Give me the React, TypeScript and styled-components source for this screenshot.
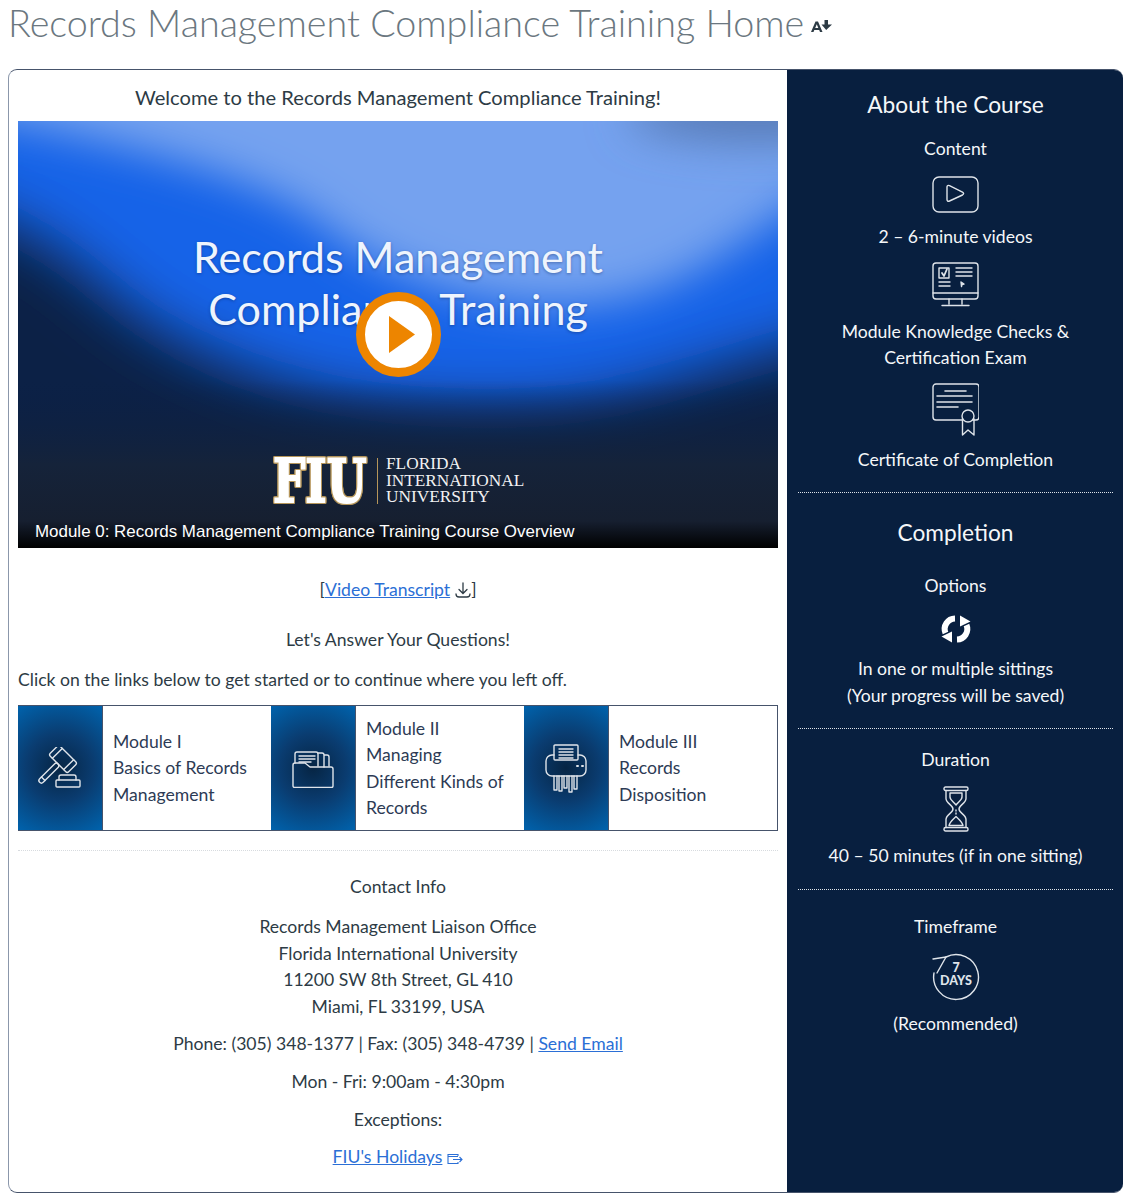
import React from "react";
import styled, { createGlobalStyle } from "styled-components";

const GlobalStyle = createGlobalStyle`
  html, body {
    margin: 0;
    padding: 0;
    background: #fff;
  }
  body {
    font-family: "Lato", "Helvetica Neue", Arial, sans-serif;
    font-size: 17.6px;
    line-height: 26.4px;
    color: #2d3b45;
  }
`;

const Page = styled.div`
  width: 1129px;
  height: 1200px;
  padding: 0 6px 0 8px;
  box-sizing: border-box;
  overflow: hidden;
`;

const TitleRow = styled.div`
  display: flex;
  align-items: center;
  height: 69px;
  padding-bottom: 23px;
  box-sizing: border-box;
  gap: 7px;
`;

const Title = styled.h1`
  margin: 0;
  font-weight: 300;
  font-size: 37.7px;
  line-height: 50px;
  color: #6b7780;
  white-space: nowrap;
`;

const TitleIcon = styled.svg`
  margin-top: 5px;
`;

const Panel = styled.div`
  display: grid;
  grid-template-columns: 1fr 336px;
  height: 1124px;
  box-sizing: border-box;
  border: 1px solid #46536b;
  border-left-color: #8b97ab;
  border-right: none;
  border-radius: 9px;
  overflow: hidden;
`;

const Main = styled.main`
  padding: 14px 9px 0 9px;
  min-width: 0;
  line-height: 26.5px;
`;

const Para = styled.p<{ $top?: number; $left?: boolean }>`
  margin: ${(p) => p.$top ?? 0}px 0 0;
  text-align: ${(p) => (p.$left ? "left" : "center")};
`;

const Welcome = styled(Para)`
  font-size: 20.15px;
  line-height: 27px;
`;

const Poster = styled.div`
  position: relative;
  width: 760px;
  height: 427px;
  margin-top: 10px;
  overflow: hidden;
  background: #0f2142;
`;

const PosterArt = styled.svg`
  display: block;
  width: 100%;
  height: 100%;
`;

const PosterTitle = styled.div`
  position: absolute;
  left: 0;
  right: 0;
  top: 109px;
  text-align: center;
  color: #eef4fd;
  font-size: 43.1px;
  line-height: 52px;
  text-shadow: 0 1px 3px rgba(10, 30, 80, 0.4);
`;

const PlayButton = styled.svg`
  position: absolute;
  left: 337px;
  top: 170px;
  width: 87px;
  height: 87px;
`;

const Logo = styled.div`
  position: absolute;
  left: 255px;
  top: 335px;
  display: flex;
  align-items: center;
  height: 50px;
`;

const LogoMark = styled.span`
  display: inline-block;
  width: 104px;
  font-family: "DejaVu Serif", serif;
  font-weight: 700;
  font-size: 60px;
  line-height: 50px;
  color: #fff;
  -webkit-text-stroke: 2px #fff;
  transform: scaleX(0.76);
  transform-origin: left center;
  filter: drop-shadow(1px 0 0 #b6965a) drop-shadow(-1px 0 0 #b6965a) drop-shadow(0 1px 0 #b6965a) drop-shadow(0 -1px 0 #b6965a);
`;

const LogoRule = styled.span`
  width: 1px;
  height: 46px;
  background: #b6965a;
  margin-right: 8px;
`;

const LogoName = styled.span`
  font-family: "Liberation Serif", serif;
  font-size: 17.3px;
  line-height: 16.5px;
  color: #f2f2f2;
`;

const Caption = styled.div`
  position: absolute;
  left: 17px;
  bottom: 4px;
  font-family: "Liberation Sans", Arial, sans-serif;
  font-size: 16.95px;
  line-height: 24px;
  color: #fff;
`;

const Link = styled.a`
  color: #2b6fd6;
  text-decoration: underline;
`;

const InlineIcon = styled.svg<{ $drop?: number }>`
  display: inline-block;
  vertical-align: ${(p) => p.$drop ?? -3}px;
  margin-left: 5px;
`;

const Modules = styled.div`
  display: grid;
  grid-template-columns: repeat(3, 253px);
  width: 760px;
  height: 126px;
  margin-top: 11px;
  box-sizing: border-box;
  border: 1px solid #46536b;
  border-left: none;
`;

const ModuleCard = styled.div`
  display: grid;
  grid-template-columns: 85px 1fr;
  min-width: 0;
`;

const ModuleIcon = styled.div`
  display: flex;
  align-items: center;
  justify-content: center;
  background: radial-gradient(circle at center, #062544 0%, #0a3c70 45%, #0063ad 100%);
  border-right: 1px solid #46536b;
`;

const ModuleText = styled.a`
  display: flex;
  flex-direction: column;
  justify-content: center;
  padding: 2px 0 0 10px;
  color: #2d3b55;
`;

const Divider = styled.hr`
  border: 0;
  border-top: 1px dotted #d7dbdf;
  margin: 19px 0 0;
`;

const Sidebar = styled.aside`
  background: #081f3f;
  color: #f5f7f9;
  padding: 20px 10px 0 11px;
  text-align: center;
`;

const SideHeading = styled.h2<{ $top?: number }>`
  margin: ${(p) => p.$top ?? 0}px 0 0;
  font-weight: 400;
  font-size: 22.7px;
  line-height: 30px;
`;

const SideText = styled.p<{ $top?: number }>`
  margin: ${(p) => p.$top ?? 0}px 0 0;
`;

const SideIcon = styled.div<{ $top: number; $h: number }>`
  display: flex;
  justify-content: center;
  margin-top: ${(p) => p.$top}px;
  height: ${(p) => p.$h}px;
`;

const SideRule = styled.hr<{ $top: number }>`
  border: 0;
  border-top: 1px dotted #dfe4ea;
  margin: ${(p) => p.$top}px 0 0;
`;

const ic = { fill: "none", stroke: "#dfe4ea", strokeWidth: 1.4, strokeLinecap: "round", strokeLinejoin: "round" } as const;

const GavelIcon = () => (
  <svg width="44" height="42" viewBox="0 0 44 42" {...ic}>
    <g transform="translate(25 12) rotate(-45)">
      <rect x="-7" y="-13" width="14" height="26" rx="2" />
      <path d="M-7 -8H7M-7 8H7" />
      <rect x="-33" y="-2.500" width="26" height="5" rx="2.500" />
      <path d="M-28 -2.500v5" />
    </g>
    <path d="M21 33v-3a2 2 0 0 1 2-2h13a2 2 0 0 1 2 2v3" />
    <rect x="18" y="33" width="24" height="7" rx="1" />
  </svg>
);

const FolderIcon = () => (
  <svg width="42" height="40" viewBox="0 0 42 40" {...ic}>
    <path d="M3 15V6a2 2 0 0 1 2-2h19a2 2 0 0 1 2 2v12" />
    <path d="M7 8h16M7 11h16M7 14h12" />
    <path d="M26 5h4a2 2 0 0 1 2 2v12M32 7h3a2 2 0 0 1 2 2v9" />
    <path d="M1 38V17a2 2 0 0 1 2-2h10l5 4h21a2 2 0 0 1 2 2v17a1.500 1.500 0 0 1-1.500 1.500H2.500A1.500 1.500 0 0 1 1 38z" />
  </svg>
);

const ShredderIcon = () => (
  <svg width="44" height="50" viewBox="0 0 44 50" {...ic}>
    <path d="M10 16V3a1 1 0 0 1 1-1h22a1 1 0 0 1 1 1v13a1 1 0 0 1-1 1H11a1 1 0 0 1-1-1z" />
    <path d="M15 6h14M15 9h14M15 12h14M15 15h14" />
    <path d="M10 12H8a6 6 0 0 0-6 6v9a6 6 0 0 0 6 6h28a6 6 0 0 0 6-6v-9a6 6 0 0 0-6-6h-2" />
    <path d="M33 23h1M38 23h1" strokeWidth={2} />
    <path d="M10 33v14h3V33M15 33v15h3V33M20 33v12h3V33M25 33v16h3V33M30 33v13h3V33" />
  </svg>
);

const VideoIcon = () => (
  <svg width="47" height="37" viewBox="0 0 47 37" {...ic}>
    <rect x="1" y="1" width="45" height="35" rx="6" />
    <path d="M15 11.500c0-1.500 1-2 2.500-1.300l13 6.500c1.500.8 1.500 2 0 2.800l-13 6c-1.500.6-2.500 0-2.500-1.500z" transform="translate(0 -.5)" />
  </svg>
);

const ExamIcon = () => (
  <svg width="47" height="46" viewBox="0 0 47 46" {...ic}>
    <rect x="1" y="1" width="45" height="36" rx="3" />
    <path d="M1 31h45" />
    <path d="M17 37v5M30 37v5M10 43.500h27" />
    <rect x="7" y="6" width="10" height="10" />
    <path d="M10 11l2 3 3-7" strokeWidth={1.8} />
    <path d="M7 20h11M7 24h11M24 6h16M24 10h16M24 14h16" />
    <path d="M29 20l3 2-2 .5-.5 2z" fill="#dfe4ea" />
  </svg>
);

const CertificateIcon = () => (
  <svg width="47" height="54" viewBox="0 0 47 54" {...ic}>
    <path d="M30 37H4a3 3 0 0 1-3-3V4a3 3 0 0 1 3-3h40a3 3 0 0 1 3 3v30a3 3 0 0 1-3 3h-3" />
    <path d="M13 8h21M5 13h35M5 19h35M5 24h21" strokeWidth={1.6} />
    <circle cx="36" cy="33" r="6" />
    <path d="M30.500 36v16l5.500-5 6 5V36" />
  </svg>
);

const CycleHalf = () => (
  <>
    <path d="M15 3.500A10.500 10.500 0 0 0 5.500 18" fill="none" stroke="#fff" strokeWidth="6" />
    <path d="M1.500 21.500L12 16.500V27.500z" fill="#fff" />
  </>
);

const CycleIcon = () => (
  <svg width="32" height="28" viewBox="0 0 32 28">
    <CycleHalf />
    <g transform="rotate(180 16 14)">
      <CycleHalf />
    </g>
  </svg>
);

const HourglassIcon = () => (
  <svg width="26" height="46" viewBox="0 0 26 46" {...ic}>
    <rect x="1" y="1" width="24" height="3.500" rx="1.500" />
    <rect x="1" y="41.500" width="24" height="3.500" rx="1.500" />
    <path d="M3 4.500v8c0 5 7 6.500 7 10.500s-7 5.500-7 10.500v8M23 4.500v8c0 5-7 6.500-7 10.500s7 5.500 7 10.500v8" />
    <path d="M7 7h12v4c0 3-4 5-6 8-2-3-6-5-6-8z" />
    <path d="M13 24v1M13 27v1" />
    <path d="M6 39.500c1-4 5-7 7-9 2 2 6 5 7 9z" />
  </svg>
);

const DaysMark = styled.div`
  position: relative;
  width: 48px;
  height: 48px;
`;

const DaysLabel = styled.div`
  position: absolute;
  left: 1px;
  right: 0;
  top: 8px;
  text-align: center;
  font-family: "Lato", sans-serif;
  font-weight: 900;
  font-size: 12.5px;
  line-height: 13px;
  color: #dfe4ea;
`;

const DaysIcon = () => (
  <DaysMark>
    <svg width="48" height="48" viewBox="0 0 48 48" {...ic}>
      <path d="M14 4A22.400 22.400 0 1 1 2 20" />
      <path d="M1 6L14 4L5 20" />
    </svg>
    <DaysLabel>
      7
      <br />
      DAYS
    </DaysLabel>
  </DaysMark>
);

const modules = [
  { icon: <GavelIcon />, lines: ["Module I", "Basics of Records", "Management"] },
  { icon: <FolderIcon />, lines: ["Module II", "Managing", "Different Kinds of", "Records"] },
  { icon: <ShredderIcon />, lines: ["Module III", "Records", "Disposition"] },
];

const App = () => (
  <>
    <GlobalStyle />
    <Page>
      <TitleRow>
        <Title>Records Management Compliance Training Home</Title>
        <TitleIcon width="21" height="12" viewBox="0 0 21 12">
          <path fillRule="evenodd" d="M0 12L4.500 1.500h2.500L11.500 12H9L8.200 10H3.300L2.500 12zM4.200 8h3.100L5.750 4.200z" fill="#2d3b45" />
          <path d="M13.500 0h3.500v4.500h4L15.200 10 10.500 4.500h3z" fill="#2d3b45" />
        </TitleIcon>
      </TitleRow>
      <Panel>
        <Main>
          <Welcome>Welcome to the Records Management Compliance Training!</Welcome>
          <Poster>
            <PosterArt viewBox="0 0 760 428" preserveAspectRatio="none">
              <defs>
                <filter id="soft" filterUnits="userSpaceOnUse" x="-200" y="-200" width="1160" height="830">
                  <feGaussianBlur stdDeviation="22" />
                </filter>
                <filter id="softer" filterUnits="userSpaceOnUse" x="-200" y="-200" width="1160" height="830">
                  <feGaussianBlur stdDeviation="30" />
                </filter>
                <linearGradient id="floor" x1="0" y1="0" x2="0" y2="1">
                  <stop offset="0" stopColor="#0a1f44" stopOpacity="0" />
                  <stop offset="0.5" stopColor="#15233a" />
                  <stop offset="0.84" stopColor="#161f30" />
                  <stop offset="1" stopColor="#000" />
                </linearGradient>
              </defs>
              <rect width="760" height="428" fill="#0c2146" />
              <path
                d="M-60 -60H820V215C700 240 620 285 500 288C380 290 260 280 135 205C80 170 40 110 -60 85Z"
                fill="#1664e8"
                filter="url(#softer)"
              />
              <path
                d="M-60 -60V-10C90 20 230 50 300 100C380 170 500 195 594 180C680 165 730 110 820 60V-60Z"
                fill="#74a2ef"
                filter="url(#soft)"
              />
              <ellipse cx="740" cy="-6" rx="130" ry="26" fill="#5679b4" filter="url(#soft)" />
              <rect y="260" width="760" height="168" fill="url(#floor)" />
            </PosterArt>
            <PosterTitle>
              Records Management
              <br />
              Compliance Training
            </PosterTitle>
            <PlayButton viewBox="0 0 87 87">
              <circle cx="43.500" cy="43.500" r="38" fill="#fff" stroke="#ed8500" strokeWidth="9" />
              <path d="M34 25l26 18.500L34 62z" fill="#ed8500" />
            </PlayButton>
            <Logo>
              <LogoMark>FIU</LogoMark>
              <LogoRule />
              <LogoName>
                FLORIDA
                <br />
                INTERNATIONAL
                <br />
                UNIVERSITY
              </LogoName>
            </Logo>
            <Caption>Module 0: Records Management Compliance Training Course Overview</Caption>
          </Poster>
          <Para $top={29}>
            [<Link href="#">Video Transcript</Link>
            <InlineIcon width="16" height="17" viewBox="0 0 16 17" fill="none" stroke="#2d3b45" strokeWidth="1.3" strokeLinecap="round">
              <path d="M8 1v10M4 7.500L8 11.500l4-4M1 12c0 2 1 3 3 3h8c2 0 3-1 3-3" />
            </InlineIcon>
            ]
          </Para>
          <Para $top={23}>Let's Answer Your Questions!</Para>
          <Para $top={14} $left>
            Click on the links below to get started or to continue where you left off.
          </Para>
          <Modules>
            {modules.map((m) => (
              <ModuleCard key={m.lines[0]}>
                <ModuleIcon>{m.icon}</ModuleIcon>
                <ModuleText>
                  {m.lines.map((l) => (
                    <span key={l}>{l}</span>
                  ))}
                </ModuleText>
              </ModuleCard>
            ))}
          </Modules>
          <Divider />
          <Para $top={23}>Contact Info</Para>
          <Para $top={14}>
            Records Management Liaison Office
            <br />
            Florida International University
            <br />
            11200 SW 8th Street, GL 410
            <br />
            Miami, FL 33199, USA
          </Para>
          <Para $top={11}>
            Phone: (305) 348-1377 | Fax: (305) 348-4739 | <Link href="#">Send Email</Link>
          </Para>
          <Para $top={11}>Mon - Fri: 9:00am - 4:30pm</Para>
          <Para $top={12}>Exceptions:</Para>
          <Para $top={10}>
            <Link href="#">FIU's Holidays</Link>
            <InlineIcon $drop={-2} width="16" height="12" viewBox="0 0 16 12" fill="none" stroke="#2b6fd6" strokeWidth="1.1">
              <path d="M11 3V1.500H1v9h10V9M1 3.500h10M6 6.500h9M12.500 4l2.500 2.500L12.500 9" />
            </InlineIcon>
          </Para>
        </Main>
        <Sidebar>
          <SideHeading>About the Course</SideHeading>
          <SideText $top={16}>Content</SideText>
          <SideIcon $top={14} $h={37}>
            <VideoIcon />
          </SideIcon>
          <SideText $top={11}>2 – 6-minute videos</SideText>
          <SideIcon $top={11} $h={46}>
            <ExamIcon />
          </SideIcon>
          <SideText $top={11}>
            Module Knowledge Checks &amp;
            <br />
            Certification Exam
          </SideText>
          <SideIcon $top={11} $h={54}>
            <CertificateIcon />
          </SideIcon>
          <SideText $top={10}>Certificate of Completion</SideText>
          <SideRule $top={19} />
          <SideHeading $top={25}>Completion</SideHeading>
          <SideText $top={25}>Options</SideText>
          <SideIcon $top={16} $h={28}>
            <CycleIcon />
          </SideIcon>
          <SideText $top={13}>
            In one or multiple sittings
            <br />
            (Your progress will be saved)
          </SideText>
          <SideRule $top={19} />
          <SideText $top={18}>Duration</SideText>
          <SideIcon $top={12} $h={46}>
            <HourglassIcon />
          </SideIcon>
          <SideText $top={11}>40 – 50 minutes (if in one sitting)</SideText>
          <SideRule $top={20} />
          <SideText $top={24}>Timeframe</SideText>
          <SideIcon $top={13} $h={48}>
            <DaysIcon />
          </SideIcon>
          <SideText $top={10}>(Recommended)</SideText>
        </Sidebar>
      </Panel>
    </Page>
  </>
);

export default App;
